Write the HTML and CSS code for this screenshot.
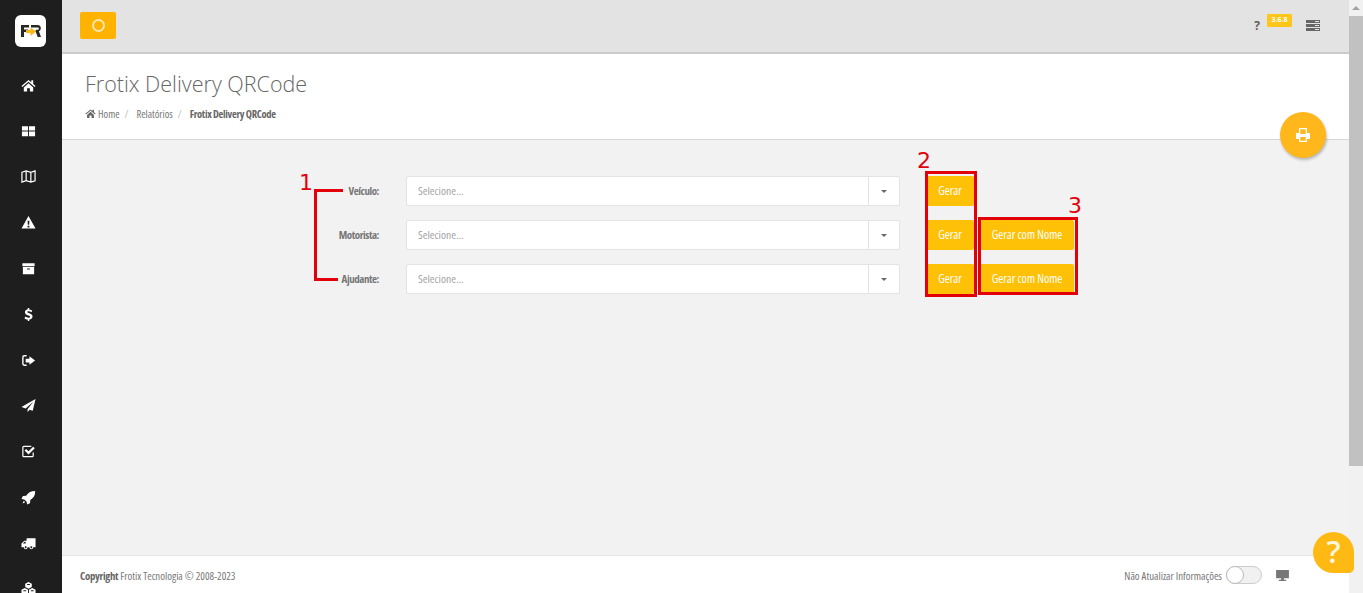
FILE: index.html
```html
<!DOCTYPE html>
<html lang="pt-BR">
<head>
<meta charset="utf-8">
<title>Frotix Delivery QRCode</title>
<link rel="stylesheet" href="styles.css">
</head>
<body>
<div class="app">
  <nav class="sidebar">
    <div class="logo"><svg width="20" height="12" viewBox="0 0 20 12"><path fill="#2a2723" d="M0 0h8v2.500H3V4.500h4v2.500H3V12H0z"/><path fill="#2a2723" d="M10 0h6.500C19 0 19.800 1.500 19.800 3.200c0 1.500-.8 2.600-1.900 3.100L20 12h-3.300l-2-5.200h-1l1.500-2h2c.8 0 .8-2.300 0-2.300H10z"/><path fill="#fdb913" d="M5 5h4.500V2.500L15 6.500l-5.500 4.500V8H5z"/></svg></div>
    <ul class="menu">
      <li><svg viewBox="0 0 16 16"><path d="M8 2 0.500 8.500l1 1L8 4l6.500 5.500 1-1L13 6.300V2.500h-2v2L8 2zM3 10v4.500h3.500v-3.500h3v3.500H13V10L8 5.500z"/></svg></li>
      <li><svg viewBox="0 0 16 16"><path d="M1 2.500h6.500V7H1zM8.500 2.500H15V7H8.500zM1 8h6.500v5H1zM8.500 8H15v5H8.500z"/></svg></li>
      <li><svg viewBox="0 0 16 16"><path fill="none" stroke="#fff" stroke-width="1.300" d="M1 3.500 5.500 2l5 1.500L15 2v10.500L10.500 14l-5-1.500L1 14zM5.500 2v10.500M10.500 3.500V14"/></svg></li>
      <li><svg viewBox="0 0 16 16"><path fill-rule="evenodd" d="M8 1 .5 14.500h15zM7 6h2l-.3 4.500H7.300zM7 11.500h2v1.700H7z"/></svg></li>
      <li><svg viewBox="0 0 16 16"><path fill-rule="evenodd" d="M1.500 2.500h13v3h-13zM2 6.500h12V14H2zM6.500 8v1h3V8z"/></svg></li>
      <li><svg viewBox="0 0 16 16"><path d="M7.200 1h1.600v1.600c1.400.1 2.600.6 3.200 1.100l-.9 1.800c-.8-.5-1.900-1-3-1-1 0-1.400.4-1.400.9 0 1.500 5.600 1 5.600 4.800 0 1.700-1.200 2.900-3.500 3.200V15H7.200v-1.600c-1.500-.2-2.800-.8-3.500-1.500l1-1.800c.9.700 2.100 1.300 3.300 1.300 1.100 0 1.700-.4 1.700-1.100 0-1.600-5.500-1-5.500-4.700 0-1.600 1.100-2.900 3-3.200z"/></svg></li>
      <li><svg viewBox="0 0 16 16"><path fill="none" stroke="#fff" stroke-width="1.500" d="M6 3H3.500C2.500 3 2 3.500 2 4.500v7c0 1 .5 1.500 1.500 1.500H6"/><path d="M9 3.500 15 8l-6 4.500V10H5V6h4z"/></svg></li>
      <li><svg viewBox="0 0 16 16"><path d="M15.500 1 .5 9.500 5 11.300 13 4l-6 8v3l2.300-2.600 3.200 1.300z"/></svg></li>
      <li><svg viewBox="0 0 16 16"><path fill="none" stroke="#fff" stroke-width="1.300" d="M13 9v3.500c0 .6-.4 1-1 1H3c-.6 0-1-.4-1-1v-9c0-.6.4-1 1-1h8"/><path d="M3.800 7 5.500 5.300 8 7.800l5-5 1.700 1.700L8 11.200z"/></svg></li>
      <li><svg viewBox="0 0 16 16"><path d="M15 1c.3 4-1 7-5 9.500l-.5 3.500L6.500 15.500l-.5-3L3.500 10l-3-.5L2 6.500 5.500 6C8 2.500 11 1 15 1zM3 11.500l1.500 1.500-3 1.500z"/></svg></li>
      <li><svg viewBox="0 0 16 16"><path fill-rule="evenodd" d="M6 2.500h9.500v9.500H13a2 2 0 0 1-4 0H7a2 2 0 0 1-4 0H.5V8L3.500 5H6zM2 8h3V6H3.800zM5 11a1 1 0 1 0 .01 0zM11 11a1 1 0 1 0 .01 0z"/></svg></li>
      <li><svg viewBox="0 0 16 16"><path fill-rule="evenodd" d="M8 0 11.500 1.800v3.600L8 7.200 4.500 5.400V1.800zM4 6.500 7.500 8.300v3.700L4 13.800.5 12V8.300zM12 6.500l3.500 1.800V12L12 13.800 8.500 12V8.300zM6.500 2.200v1h3v-1zM2.500 8.800v1h3v-1zM10.500 8.800v1h3v-1z"/></svg></li>
    </ul>
  </nav>

  <div class="main">
    <header class="topbar">
      <button class="spin-btn" type="button"><span class="ring"></span></button>
      <div class="top-tools">
        <span class="question">?</span>
        <span class="version">3.6.8</span>
        <svg class="server" viewBox="0 0 14 11"><path d="M0 0h14v3H0zM0 4h14v3H0zM0 8h14v3H0z"/><path fill="#e3e3e3" d="M9 1h4v1H9zM9 5h4v1H9zM9 9h4v1H9z"/></svg>
      </div>
    </header>

    <section class="page-head">
      <h1>Frotix Delivery QRCode</h1>
      <ol class="crumbs">
        <li><svg class="crumb-home" viewBox="0 0 16 16"><path d="M8 2 .5 8.500l1 1L8 4l6.500 5.500 1-1L13 6.300V2.500h-2v2L8 2zM3 10v4.500h3.500v-3.500h3v3.500H13V10L8 5.500z"/></svg>Home</li>
        <li class="sep">/</li>
        <li>Relatórios</li>
        <li class="sep">/</li>
        <li class="current">Frotix Delivery QRCode</li>
      </ol>
      <button class="fab" type="button"><svg viewBox="0 0 16 16"><path fill-rule="evenodd" d="M4 1h8v5h2c.6 0 1 .4 1 1v5h-3v3H4v-3H1V7c0-.6.4-1 1-1h2zM5.300 2.300V7h5.400V2.300zM5.300 10v3.700h5.400V10z"/></svg></button>
    </section>

    <main class="content">
      <form class="qr-form">
        <label class="field-label">Veículo:</label>
        <div class="combo"><span>Selecione...</span><i class="combo-arrow"><b></b></i></div>
        <button class="btn" type="button">Gerar</button>
        <span></span>

        <label class="field-label">Motorista:</label>
        <div class="combo"><span>Selecione...</span><i class="combo-arrow"><b></b></i></div>
        <button class="btn" type="button">Gerar</button>
        <button class="btn btn-wide" type="button">Gerar com Nome</button>

        <label class="field-label">Ajudante:</label>
        <div class="combo"><span>Selecione...</span><i class="combo-arrow"><b></b></i></div>
        <button class="btn" type="button">Gerar</button>
        <button class="btn btn-wide" type="button">Gerar com Nome</button>
      </form>
      <div class="mark bracket"></div>
      <div class="mark bracket-tail"></div>
      <div class="mark box-two"></div>
      <div class="mark box-three"></div>
      <span class="mark-num num-one">1</span>
      <span class="mark-num num-two">2</span>
      <span class="mark-num num-three">3</span>
    </main>

    <footer class="footer">
      <p class="copy"><strong>Copyright</strong> Frotix Tecnologia © 2008-2023</p>
      <div class="foot-tools">
        <span>Não Atualizar Informações</span>
        <span class="toggle"><i></i></span>
        <svg class="monitor" viewBox="0 0 14 12"><path d="M0 0h14v9H8.500v1.500H11V12H3v-1.500h2.500V9H0z"/></svg>
      </div>
    </footer>
  </div>

  <div class="scrollbar">
    <div class="scroll-up"></div>
    <div class="scroll-thumb"></div>
  </div>
</div>
<div class="help-bubble">?</div>
</body>
</html>
```
FILE: styles.css
```css
* { box-sizing: border-box; }
html, body { margin: 0; height: 100%; overflow: hidden; }
body {
  font-family: "Open Sans", "Liberation Sans", sans-serif;
  font-stretch: condensed;
  color: #6a6a6a;
  background: #f2f2f2;
  position: relative;
}
.app { display: flex; height: 593px; }

.sidebar { width: 62px; flex: none; background: #1e1e1e; overflow: hidden; }
.logo {
  width: 31px; height: 32px; margin: 15px 0 0 15px;
  background: #fff; border-radius: 6px;
  display: flex; align-items: center; justify-content: center;
}
.menu { list-style: none; margin: 15.500px 0 0; padding: 0; }
.menu li { height: 45.800px; display: flex; align-items: center; justify-content: center; padding-right: 6px; }
.menu svg { width: 15px; height: 15px; fill: #fff; }

.main { flex: 1; min-width: 0; display: flex; flex-direction: column; }

.topbar {
  height: 54px; flex: none; background: #e3e3e3; border-bottom: 2px solid #cbcbcb;
  display: flex; align-items: flex-start; justify-content: space-between;
  padding: 12px 29px 0 18px;
}
.spin-btn {
  width: 36px; height: 27px; border: 0; padding: 0; border-radius: 2px;
  background: #ffb300; display: flex; align-items: center; justify-content: center;
}
.ring { width: 13px; height: 13px; border-radius: 50%; border: 2px solid #fbe7b0; }
.top-tools { display: flex; align-items: flex-start; }
.question { font: 700 12px/1 "Open Sans", sans-serif; color: #5f5f5f; margin: 8px 7px 0 0; }
.version {
  font: 700 7px/11px "Open Sans", sans-serif; color: #fff; background: #ffc61a;
  width: 25px; height: 13px; text-align: center; margin-top: 2px; border-radius: 1px;
}
.server { width: 14px; height: 11px; fill: #666; margin: 8px 0 0 14px; }

.page-head { height: 86px; flex: none; background: #fff; border-bottom: 1px solid #d8d8d8; padding: 15px 0 0 23px; position: relative; }
h1 { margin: 0; font: 300 21.500px/30px "Open Sans", sans-serif; color: #666; }
.crumbs { list-style: none; margin: 8px 0 0; padding: 0; display: flex; align-items: center; font-size: 10.500px; line-height: 14px; color: #777; }
.crumbs .sep { color: #bbb; margin: 0 4px 0 5px; }
.crumbs li:nth-child(3) { margin-left: 4px; }
.crumbs .current { font-weight: 700; color: #666; margin-left: 4px; letter-spacing: -.3px; }
.crumb-home { width: 11px; height: 11px; fill: #666; margin-right: 2px; vertical-align: -1px; }
.fab {
  position: absolute; right: 23px; top: 58px; width: 46px; height: 46px; border: 0; border-radius: 50%;
  background: #ffb71b; box-shadow: 1px 2px 3px rgba(0,0,0,.25);
  display: flex; align-items: center; justify-content: center; padding: 0; z-index: 2;
}
.fab svg { width: 16px; height: 16px; fill: #fff; }

.content { flex: 1; position: relative; padding: 36px 0 0 227px; background: #f2f2f2; }
.qr-form {
  display: grid; grid-template-columns: 90px 547px 48px 100px; row-gap: 14px;
  align-items: center;
}
.field-label { text-align: right; font-size: 11px; font-weight: 700; color: #777; letter-spacing: -.45px; padding-bottom: 2px; }
.combo {
  margin-left: 27px; width: 494px; height: 30px; background: #fff; border: 1px solid #e3e3e3; border-radius: 2px;
  display: flex; align-items: center; justify-content: space-between;
  font-size: 11.500px; color: #a3a3a3; padding-left: 11px;
}
.combo span { padding-bottom: 2px; }
.combo-arrow { width: 31px; height: 28px; border-left: 1px solid #e3e3e3; display: flex; align-items: center; justify-content: center; }
.combo-arrow b { width: 0; height: 0; border: 3px solid transparent; border-top-color: #666; border-bottom: 0; }
.btn {
  width: 100%; height: 30px; border: 0; border-radius: 2px; background: #ffc107; color: #fff; padding: 0 0 2px;
  font-family: inherit; font-stretch: condensed; font-size: 12px;
}
.btn-wide { margin-left: 6px; width: 94px; }

.mark { position: absolute; }
.bracket { left: 252px; top: 49px; width: 29px; height: 92px; border: solid #e2000a; border-width: 3px 0 0 3px; }
.bracket-tail { left: 252px; top: 138px; width: 24px; height: 3px; background: #e2000a; }
.box-two { left: 863px; top: 31px; width: 52px; height: 126px; border: 3px solid #e2000a; }
.box-three { left: 916px; top: 77px; width: 100px; height: 78px; border: 3px solid #e2000a; }
.mark-num { position: absolute; font: 400 22px/24px "DejaVu Sans", sans-serif; color: #e2000a; }
.num-one { left: 237px; top: 31px; }
.num-two { left: 855px; top: 9px; }
.num-three { left: 1006px; top: 54px; }

.footer {
  height: 38px; flex: none; background: #fff; border-top: 1px solid #e6e6e6;
  display: flex; align-items: center; justify-content: space-between; padding: 1px 60px 0 18px;
  font-size: 10.800px; color: #777;
}
.copy { margin: 0; }
.copy strong { color: #666; letter-spacing: -.3px; }
.foot-tools { display: flex; align-items: center; }
.toggle { width: 36px; height: 18px; border: 1px solid #ccc; border-radius: 9px; background: #f1f1f1; margin-left: 4px; display: block; position: relative; }
.toggle i { display: block; width: 18px; height: 18px; margin: -1px; border: 1px solid #bbb; border-radius: 50%; background: #fff; }
.monitor { width: 13px; height: 11px; fill: #777; margin-left: 14px; }

.scrollbar { width: 14px; flex: none; background: #f1f1f1; }
.scroll-up { height: 16px; position: relative; }
.scroll-up::after {
  content: ""; position: absolute; left: 3px; top: 6px; width: 0; height: 0;
  border: 4px solid transparent; border-top: 0; border-bottom: 4px solid #a3a3a3;
}
.scroll-thumb { height: 450px; background: #c1c1c1; }

.help-bubble {
  position: absolute; left: 1313px; top: 532px; width: 41px; height: 41px;
  border-radius: 50% 50% 5px 50%; background: #ffb913; color: #fff6dc;
  font: 600 31px/39px "Open Sans", sans-serif; text-align: center;
}
```
